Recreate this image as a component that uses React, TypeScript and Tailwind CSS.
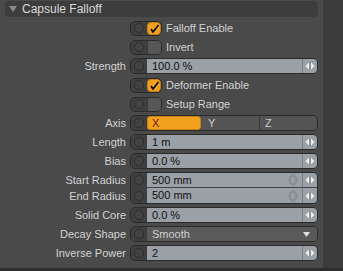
import React from "react";

const font = { fontFamily: '"Liberation Sans", Arial, sans-serif' };

function Ring() {
  return (
    <svg width="12" height="12" viewBox="0 0 12 12" className="block">
      <circle cx="6" cy="6" r="4.5" fill="#434343" stroke="#2e2e2e" strokeWidth="1" />
    </svg>
  );
}

function Arrows({ h = "h-full" }: { h?: string }) {
  return (
    <div className={`flex w-[15px] items-center justify-center border-l border-[#7a8087] bg-[#9aa0a6] ${h}`}>
      <svg width="10" height="10" viewBox="0 0 10 10">
        <path d="M4 1.5 L0.5 5 L4 8.5 Z" fill="#eeeeee" />
        <path d="M6 1.5 L9.5 5 L6 8.5 Z" fill="#eeeeee" />
        <rect x="4.5" y="1" width="1" height="8" fill="#7f858b" />
      </svg>
    </div>
  );
}

function Label({ children }: { children: React.ReactNode }) {
  return (
    <span className="w-[126px] shrink-0 text-right text-[11px] leading-none text-[#d2d2d2]">
      {children}
    </span>
  );
}

function Field({ label, value }: { label: string; value: string }) {
  return (
    <div className="flex h-[16px] items-center">
      <Label>{label}</Label>
      <div className="ml-[4px] flex h-[16px] w-[188px] overflow-hidden rounded-[5px] border border-[#2a2a2a]">
        <div className="flex w-[16px] items-center justify-center bg-[#3f3f3f]">
          <Ring />
        </div>
        <div className="flex flex-1 items-center bg-[#9aa0a6] pl-[5px] text-[11px] leading-none text-[#111111]">
          {value}
        </div>
        <Arrows />
      </div>
    </div>
  );
}

function Check({ label, on }: { label: string; on: boolean }) {
  return (
    <div className="flex h-[16px] items-center">
      <span className="w-[126px] shrink-0" />
      <div className="ml-[4px] flex h-[15px] w-[32px] overflow-hidden rounded-[5px] border border-[#2a2a2a]">
        <div className="flex w-[16px] items-center justify-center bg-[#3f3f3f]">
          <Ring />
        </div>
        <div
          className={
            on
              ? "flex flex-1 items-center justify-center rounded-[4px] border border-[#c67f10] bg-[#f2a11f]"
              : "flex-1 border-l border-[#3a3a3a] bg-[#575757]"
          }
        >
          {on && (
            <svg width="11" height="11" viewBox="0 0 11 11">
              <path d="M2 6 L4 9 L9.5 2" fill="none" stroke="#111111" strokeWidth="1.8" />
            </svg>
          )}
        </div>
      </div>
      <span className="ml-[4px] text-[11px] leading-none text-[#d2d2d2]">{label}</span>
    </div>
  );
}

function LockRing() {
  return (
    <svg width="10" height="12" viewBox="0 0 10 12" className="mr-[4px]">
      <ellipse cx="5" cy="6" rx="3.3" ry="4.3" fill="none" stroke="#878c92" strokeWidth="2.2" />
    </svg>
  );
}

export default function App() {
  return (
    <div className="flex h-[271px] w-[343px] flex-col bg-[#3a3a3a]" style={font}>
      <div className="flex h-[268px]">
        <div className="w-[323px] bg-[#4a4a4a] pt-[1px]">
          {/* header */}
          <div className="ml-[5px] flex h-[16px] w-[313px] items-center rounded-[4px] bg-[#3d3d3d]">
            <svg width="8" height="6" viewBox="0 0 8 6" className="ml-[4px]">
              <path d="M0 0 L8 0 L4 6 Z" fill="#8a8a8a" />
            </svg>
            <span className="ml-[5px] text-[12px] leading-none text-[#d8d8d8]">Capsule Falloff</span>
          </div>

          <div className="mt-[3px] flex flex-col gap-[3px]">
            <Check label="Falloff Enable" on />
            <Check label="Invert" on={false} />
            <Field label="Strength" value="100.0 %" />
            <Check label="Deformer Enable" on />
            <Check label="Setup Range" on={false} />

            {/* axis */}
            <div className="flex h-[16px] items-center">
              <Label>Axis</Label>
              <div className="ml-[4px] flex h-[16px] w-[188px] overflow-hidden rounded-[5px] border border-[#2a2a2a]">
                <div className="flex w-[16px] items-center justify-center bg-[#3f3f3f]">
                  <Ring />
                </div>
                <div className="flex w-[54px] items-center rounded-[3px] border border-[#c67f10] bg-[#f2a11f] pl-[4px] text-[11px] leading-none text-[#6a1400]">
                  X
                </div>
                <div className="flex w-[59px] items-center border-r border-[#3a3a3a] bg-[#545454] pl-[7px] text-[11px] leading-none text-[#cfcfcf]">
                  Y
                </div>
                <div className="flex flex-1 items-center bg-[#545454] pl-[5px] text-[11px] leading-none text-[#cfcfcf]">
                  Z
                </div>
              </div>
            </div>

            <Field label="Length" value="1 m" />
            <Field label="Bias" value="0.0 %" />

            {/* start / end radius */}
            <div className="flex h-[32px]">
              <div className="flex w-[126px] shrink-0 flex-col text-[11px] leading-none text-[#d2d2d2]">
                <span className="flex h-[16px] items-center justify-end">Start Radius</span>
                <span className="flex h-[16px] items-center justify-end">End Radius</span>
              </div>
              <div className="ml-[4px] flex h-[32px] w-[188px] flex-col overflow-hidden rounded-[5px] border border-[#2a2a2a]">
                {["500 mm", "500 mm"].map((v, i) => (
                  <div
                    key={i}
                    className={`flex h-[15px] ${i === 0 ? "border-b border-[#40444a]" : ""}`}
                  >
                    <div className="flex w-[16px] items-center justify-center bg-[#3f3f3f]">
                      <Ring />
                    </div>
                    <div className="flex flex-1 items-center justify-between bg-[#9aa0a6] pl-[5px] text-[11px] leading-none text-[#111111]">
                      {v}
                      <LockRing />
                    </div>
                    <Arrows />
                  </div>
                ))}
              </div>
            </div>

            <Field label="Solid Core" value="0.0 %" />

            {/* decay shape */}
            <div className="flex h-[16px] items-center">
              <Label>Decay Shape</Label>
              <div className="ml-[4px] flex h-[16px] w-[188px] overflow-hidden rounded-[5px] border border-[#2a2a2a]">
                <div className="flex w-[16px] items-center justify-center bg-[#3f3f3f]">
                  <Ring />
                </div>
                <div className="flex flex-1 items-center justify-between bg-[#5a5a5a] pl-[5px] pr-[7px] text-[11px] leading-none text-[#d0d0d0]">
                  Smooth
                  <svg width="7" height="5" viewBox="0 0 7 5">
                    <path d="M0 0 L7 0 L3.5 5 Z" fill="#e0e0e0" />
                  </svg>
                </div>
              </div>
            </div>

            <Field label="Inverse Power" value="2" />
          </div>
        </div>
        <div className="flex-1 bg-[#3c3c3c]" />
      </div>
      <div className="h-[3px] bg-[#2e2e2e]" />
    </div>
  );
}
